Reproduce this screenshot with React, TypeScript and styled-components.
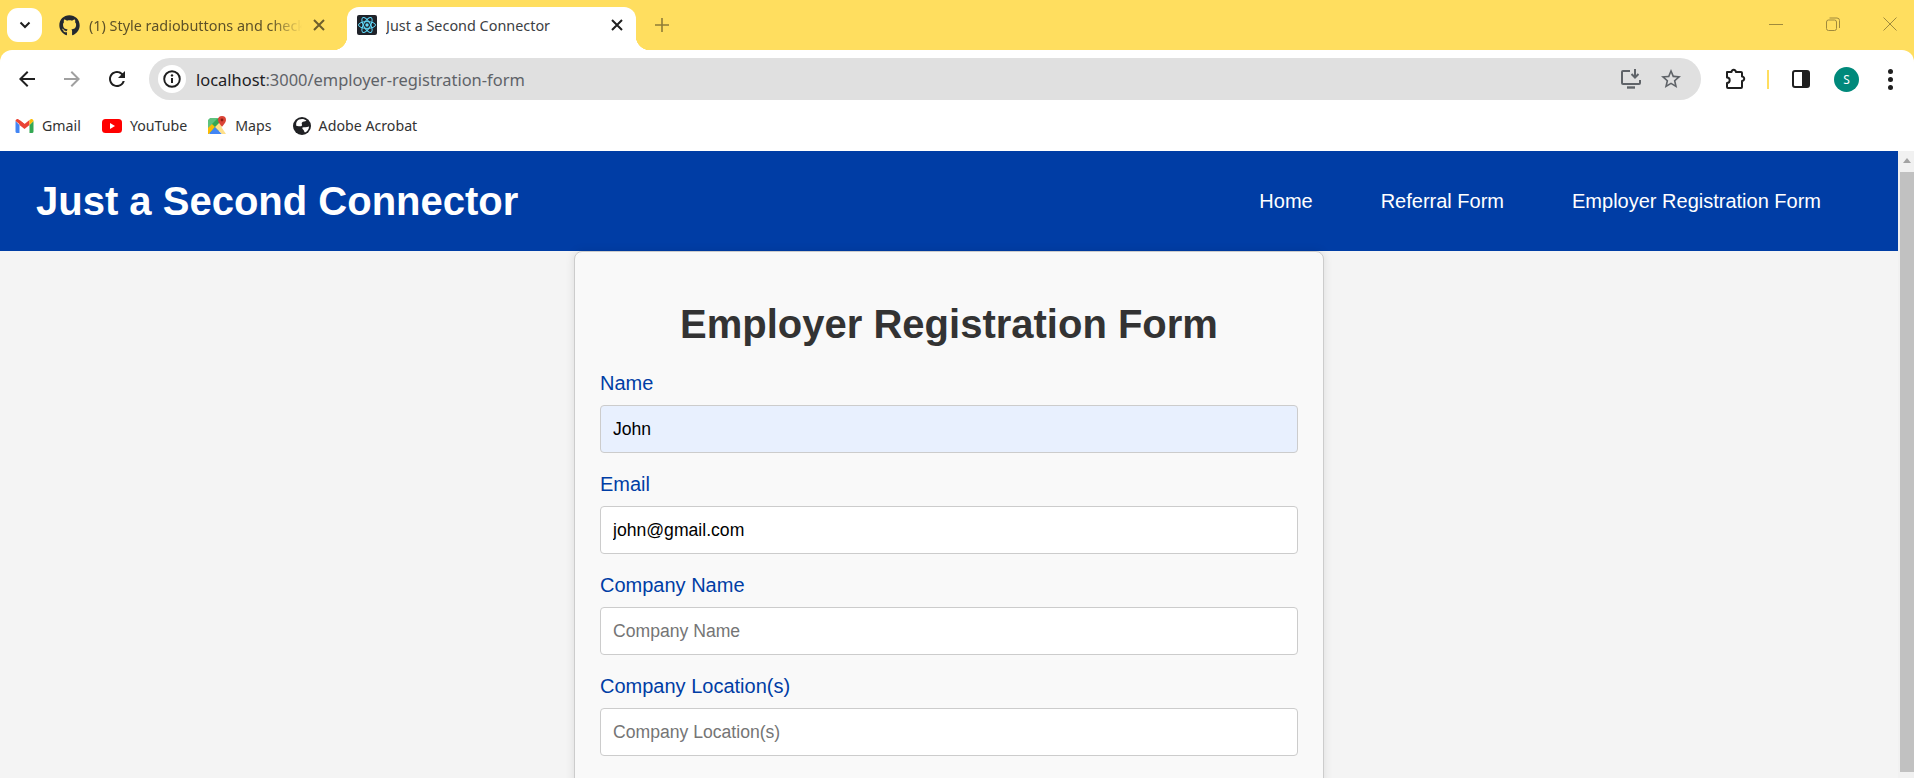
import React from "react";
import styled, { createGlobalStyle } from "styled-components";
import { FaGithub } from "react-icons/fa";

const YELLOW = "#ffde5f";
const BLUE = "#003da5";
const CHROME_FONT = `"Noto Sans", "Open Sans", sans-serif`;

const fields = [
  { label: "Name", value: "John", placeholder: "Name", autofilled: true },
  { label: "Email", value: "john@gmail.com", placeholder: "Email" },
  { label: "Company Name", value: "", placeholder: "Company Name" },
  { label: "Company Location(s)", value: "", placeholder: "Company Location(s)" },
];

const App = () => {
  return (
    <Window>
      <GlobalStyle />
      <TabStrip>
        <TabSearch>
          <svg width="12" height="8" viewBox="0 0 12 8">
            <path d="M1.5 1.5 6 6l4.5-4.5" fill="none" stroke="#1f1f1f" strokeWidth="2" />
          </svg>
        </TabSearch>
        <Tab>
          <FaGithub size={21} color="#24292f" />
          <TabTitle $fade>(1) Style radiobuttons and checkboxes</TabTitle>
          <CloseIcon color="#6e5f2c" />
        </Tab>
        <ActiveTab>
          <ReactFavicon />
          <TabTitle>Just a Second Connector</TabTitle>
          <CloseIcon color="#1f1f1f" />
        </ActiveTab>
        <NewTab>
          <svg width="14" height="14" viewBox="0 0 14 14">
            <path d="M7 0v14M0 7h14" stroke="#8f7c37" strokeWidth="1.6" />
          </svg>
        </NewTab>
        <WindowControls>
          <svg width="14" height="14" viewBox="0 0 14 14">
            <path d="M0 7.5h14" stroke="#a08a3c" strokeWidth="1" />
          </svg>
          <svg width="14" height="14" viewBox="0 0 14 14" fill="none" stroke="#a08a3c">
            <rect x="0.5" y="3" width="10" height="10.5" rx="2" />
            <path d="M3.5 1h7.5a2.5 2.5 0 0 1 2.5 2.5V11" />
          </svg>
          <svg width="14" height="14" viewBox="0 0 14 14">
            <path d="M0.5 0.5l13 13M13.5 0.5l-13 13" stroke="#a08a3c" strokeWidth="1" />
          </svg>
        </WindowControls>
      </TabStrip>

      <Toolbar>
        <NavIcons>
          <svg width="24" height="24" viewBox="0 0 24 24" fill="#1f1f1f">
            <path d="M20 11H7.83l5.59-5.59L12 4l-8 8 8 8 1.41-1.41L7.83 13H20v-2z" />
          </svg>
          <svg width="24" height="24" viewBox="0 0 24 24" fill="#a0a0a0">
            <path d="M4 11h12.17l-5.59-5.59L12 4l8 8-8 8-1.41-1.41L16.17 13H4v-2z" />
          </svg>
          <svg width="24" height="24" viewBox="0 0 24 24" fill="#1f1f1f">
            <path d="M17.65 6.35A7.958 7.958 0 0 0 12 4c-4.42 0-7.99 3.58-7.99 8s3.57 8 7.99 8c3.73 0 6.84-2.55 7.73-6h-2.08A5.99 5.99 0 0 1 12 18c-3.31 0-6-2.69-6-6s2.69-6 6-6c1.66 0 3.14.69 4.22 1.78L13 11h7V4l-2.35 2.35z" />
          </svg>
        </NavIcons>
        <AddressBar>
          <SiteInfo>
            <svg width="20" height="20" viewBox="0 0 20 20" fill="none">
              <circle cx="10" cy="10" r="7.8" stroke="#1f1f1f" strokeWidth="1.9" />
              <path d="M10 9v5" stroke="#1f1f1f" strokeWidth="2" />
              <circle cx="10" cy="6.4" r="1.2" fill="#1f1f1f" />
            </svg>
          </SiteInfo>
          <Url>
            localhost<UrlPath>:3000/employer-registration-form</UrlPath>
          </Url>
          <AddressActions>
            <svg width="22" height="22" viewBox="0 0 22 22" fill="none" stroke="#5f6368" strokeWidth="2">
              <path d="M10 3H3a1 1 0 0 0-1 1v11a1 1 0 0 0 1 1h16a1 1 0 0 0 1-1v-3" />
              <path d="M7 19.5h8" strokeWidth="2.4" />
              <path d="M15 1v8M11.5 6l3.5 3.5L18.500 6" />
            </svg>
            <svg width="24" height="24" viewBox="0 0 24 24" fill="#5f6368">
              <path d="M22 9.24l-7.19-.62L12 2 9.19 8.63 2 9.24l5.46 4.73L5.82 21 12 17.27 18.18 21l-1.63-7.03L22 9.24zM12 15.4l-3.76 2.27 1-4.28-3.32-2.88 4.38-.38L12 6.1l1.71 4.04 4.38.38-3.32 2.88 1 4.28L12 15.4z" />
            </svg>
          </AddressActions>
        </AddressBar>
        <ToolbarActions>
          <svg width="22" height="22" viewBox="0 0 22 22" fill="none" stroke="#1f1f1f" strokeWidth="2" strokeLinejoin="round">
            <path d="M3 4h4.500a2.200 2.200 0 1 1 4.400 0H17a1 1 0 0 1 1 1v3.500a2.200 2.200 0 1 1 0 4.400V19a1 1 0 0 1-1 1H4a1 1 0 0 1-1-1v-4a2.700 2.700 0 0 0 0-5.400V4z" />
          </svg>
          <ToolbarDivider />
          <svg width="18" height="18" viewBox="0 0 18 18">
            <rect x="1" y="1" width="16" height="16" rx="2" fill="#fff" stroke="#1f1f1f" strokeWidth="2" />
            <rect x="10" y="1" width="7" height="16" fill="#1f1f1f" />
          </svg>
          <Avatar>S</Avatar>
          <MoreMenu>
            <MenuDot />
            <MenuDot />
            <MenuDot />
          </MoreMenu>
        </ToolbarActions>
      </Toolbar>

      <BookmarksBar>
        <Bookmark>
          <GmailIcon />
          Gmail
        </Bookmark>
        <Bookmark>
          <YouTubeIcon />
          YouTube
        </Bookmark>
        <Bookmark>
          <MapsIcon />
          Maps
        </Bookmark>
        <Bookmark>
          <GlobeIcon />
          Adobe Acrobat
        </Bookmark>
      </BookmarksBar>

      <Viewport>
        <Page>
          <SiteHeader>
            <SiteTitle>Just a Second Connector</SiteTitle>
            <SiteNav>
              <SiteLink>Home</SiteLink>
              <SiteLink>Referral Form</SiteLink>
              <SiteLink>Employer Registration Form</SiteLink>
            </SiteNav>
          </SiteHeader>
          <FormCard>
            <FormTitle>Employer Registration Form</FormTitle>
            <FormFields>
              {fields.map((field) => (
                <Field key={field.label}>
                  <FieldLabel>{field.label}</FieldLabel>
                  <FieldInput
                    $autofilled={field.autofilled}
                    defaultValue={field.value}
                    placeholder={field.placeholder}
                  />
                </Field>
              ))}
            </FormFields>
          </FormCard>
        </Page>
        <Scrollbar>
          <ScrollArrow />
          <ScrollThumb />
        </Scrollbar>
      </Viewport>
    </Window>
  );
};

export default App;

const CloseIcon = ({ color }: { color: string }) => (
  <svg width="16" height="16" viewBox="0 0 16 16" style={{ flex: "none" }}>
    <path d="M3 3l10 10M13 3L3 13" stroke={color} strokeWidth="2" />
  </svg>
);

const ReactFavicon = () => (
  <svg width="20" height="20" viewBox="0 0 20 20">
    <rect width="20" height="20" rx="2" fill="#20232a" />
    <g fill="none" stroke="#61dafb" strokeWidth="1">
      <ellipse cx="10" cy="10" rx="8.500" ry="3.400" />
      <ellipse cx="10" cy="10" rx="8.500" ry="3.400" transform="rotate(60 10 10)" />
      <ellipse cx="10" cy="10" rx="8.500" ry="3.400" transform="rotate(120 10 10)" />
    </g>
    <circle cx="10" cy="10" r="1.700" fill="#61dafb" />
  </svg>
);

const GmailIcon = () => (
  <svg width="19" height="14" viewBox="0 0 18 14">
    <path d="M0 2v10.500A1.500 1.500 0 0 0 1.500 14H4V6z" fill="#4285f4" />
    <path d="M14 6v8h2.500a1.500 1.500 0 0 0 1.500-1.500V2z" fill="#34a853" />
    <path d="M0 2a2 2 0 0 1 3.200-1.600L9 5l-2 2.500L0 2z" fill="#ea4335" />
    <path d="M4 1l5 4 5-4v5l-5 4-5-4z" fill="#ea4335" />
    <path d="M14 1l.800-.600A2 2 0 0 1 18 2l-4 4z" fill="#fbbc04" />
  </svg>
);

const YouTubeIcon = () => (
  <svg width="20" height="14" viewBox="0 0 20 14">
    <rect width="20" height="14" rx="3.500" fill="#ff0000" />
    <path d="M8 4l5 3-5 3z" fill="#fff" />
  </svg>
);

const MapsIcon = () => (
  <svg width="19" height="19" viewBox="0 0 19 19">
    <path d="M0 4l11-2v15H1z" fill="#34a853" />
    <path d="M0 4l7 7-6 7H0z" fill="#fbbc04" />
    <path d="M1 18l6-7 7 7z" fill="#4285f4" />
    <path d="M2 2h8L0 12V4z" fill="#5ec27e" />
    <path d="M7 11l5-5 2 6 4 6h-4z" fill="#ffe08a" />
    <path d="M14 0a4 4 0 0 1 4 4c0 3-4 6-4 7 0-1-4-4-4-7a4 4 0 0 1 4-4z" fill="#db4437" />
    <circle cx="14" cy="4" r="1.400" fill="#8e1c13" />
  </svg>
);

const GlobeIcon = () => (
  <svg width="18" height="18" viewBox="0 0 18 18">
    <circle cx="9" cy="9" r="9" fill="#202124" />
    <path d="M6 2.500c3-1 5.500-.5 7.500 1-1.500 1.500-3.500.5-4.500 2s1 2.500-.5 3.500-3.500-.5-5 0C2.500 6 4 3.500 6 2.500z" fill="#fff" />
    <path d="M9.500 10.500c1.500-.5 4 0 6.500-1 .2 2.500-1.500 5-4 6-1-.5-.5-1.500-1.500-2.500s-1.500-1.800-1-2.500z" fill="#fff" />
  </svg>
);

const GlobalStyle = createGlobalStyle`
  html, body {
    margin: 0;
    padding: 0;
    height: 100%;
    overflow: hidden;
  }
`;

const Window = styled.div`
  display: flex;
  flex-direction: column;
  height: 778px;
  overflow: hidden;
  background: ${YELLOW};
  font-family: "Liberation Sans", Arial, sans-serif;
`;

const TabStrip = styled.div`
  display: flex;
  align-items: flex-end;
  flex: none;
  height: 50px;
  padding-left: 7px;
`;

const TabSearch = styled.div`
  display: flex;
  align-items: center;
  justify-content: center;
  align-self: flex-start;
  width: 35px;
  height: 34px;
  margin-top: 8px;
  background: #fff;
  border-radius: 11px;
`;

const Tab = styled.div`
  display: flex;
  align-items: center;
  width: 305px;
  height: 43px;
  padding: 0 20px 7px 17px;
  box-sizing: border-box;
  gap: 9px;
  font-family: ${CHROME_FONT};
  font-size: 14.4px;
  color: #5d5128;
`;

const ActiveTab = styled(Tab)`
  position: relative;
  width: 289px;
  padding: 0 11px 7px 10px;
  background: #fff;
  border-radius: 12px 12px 0 0;
  color: #3c4043;

  &::before,
  &::after {
    content: "";
    position: absolute;
    bottom: 0;
    width: 14px;
    height: 14px;
  }

  &::before {
    left: -14px;
    background: radial-gradient(circle at 0 0, transparent 14px, #fff 14.500px);
  }

  &::after {
    right: -14px;
    background: radial-gradient(circle at 100% 0, transparent 14px, #fff 14.500px);
  }
`;

const TabTitle = styled.span<{ $fade?: boolean }>`
  flex: 1;
  min-width: 0;
  overflow: hidden;
  white-space: nowrap;
  ${(props) =>
    props.$fade &&
    `mask-image: linear-gradient(to right, #000 85%, transparent 100%);`}
`;

const NewTab = styled.div`
  display: flex;
  align-items: center;
  align-self: flex-start;
  height: 50px;
  margin-left: 19px;
`;

const WindowControls = styled.div`
  display: flex;
  align-items: center;
  align-self: flex-start;
  gap: 43px;
  height: 48px;
  margin-left: auto;
  padding-right: 17px;
`;

const Toolbar = styled.div`
  display: flex;
  align-items: center;
  flex: none;
  height: 50px;
  padding-top: 8px;
  box-sizing: border-box;
  background: #fff;
  border-radius: 12px 12px 0 0;
`;

const NavIcons = styled.div`
  display: flex;
  align-items: center;
  gap: 21px;
  padding: 0 20px 0 15px;
`;

const AddressBar = styled.div`
  display: flex;
  align-items: center;
  flex: none;
  width: 1552px;
  height: 42px;
  background: #e0e0e0;
  border-radius: 21px;
  padding: 0 18px 0 9px;
  box-sizing: border-box;
`;

const SiteInfo = styled.div`
  display: flex;
  align-items: center;
  justify-content: center;
  width: 28px;
  height: 28px;
  background: #fff;
  border-radius: 50%;
`;

const Url = styled.div`
  margin-left: 10px;
  font-family: ${CHROME_FONT};
  font-size: 16.45px;
  color: #202124;
`;

const UrlPath = styled.span`
  color: #5f6368;
`;

const AddressActions = styled.div`
  display: flex;
  align-items: center;
  gap: 17px;
  margin-left: auto;
`;

const ToolbarActions = styled.div`
  display: flex;
  align-items: center;
  flex: none;
  gap: 21px;
  padding-left: 23px;
`;

const ToolbarDivider = styled.div`
  width: 2px;
  height: 19px;
  margin-right: 2px;
  background: ${YELLOW};
`;

const Avatar = styled.div`
  display: flex;
  align-items: center;
  justify-content: center;
  width: 25px;
  height: 25px;
  margin: 0 8px 0 3px;
  border-radius: 50%;
  background: #00897b;
  color: #fff;
  font-family: ${CHROME_FONT};
  font-size: 12px;
`;

const MoreMenu = styled.div`
  display: flex;
  flex-direction: column;
  flex: none;
  gap: 3px;
`;

const MenuDot = styled.span`
  display: block;
  width: 5px;
  height: 5px;
  border-radius: 50%;
  background: #1f1f1f;
`;

const BookmarksBar = styled.div`
  display: flex;
  align-items: center;
  flex: none;
  gap: 21px;
  height: 51px;
  padding-left: 15px;
  background: #fff;
`;

const Bookmark = styled.div`
  display: flex;
  align-items: center;
  gap: 8px;
  font-family: ${CHROME_FONT};
  font-size: 14.2px;
  color: #333;
`;

const Viewport = styled.div`
  display: flex;
  flex: 1;
  min-height: 0;
  background: #f4f4f4;
`;

const Page = styled.div`
  flex: 1;
  min-width: 0;
`;

const SiteHeader = styled.header`
  display: flex;
  align-items: center;
  justify-content: space-between;
  height: 100px;
  padding: 0 77px 0 36px;
  background: ${BLUE};
  color: #fff;
`;

const SiteTitle = styled.h1`
  margin: 0;
  font-size: 40px;
  font-weight: 700;
`;

const SiteNav = styled.nav`
  display: flex;
  gap: 68px;
`;

const SiteLink = styled.a`
  font-size: 20px;
  color: #fff;
`;

const FormCard = styled.section`
  box-sizing: border-box;
  width: 750px;
  margin: 0 auto;
  padding: 25px 25px 80px;
  background: #f9f9f9;
  border: 1px solid #ccc;
  border-radius: 8px;
  box-shadow: 0 0 10px rgba(0, 0, 0, 0.1);
`;

const FormTitle = styled.h2`
  margin: 25px 0;
  font-size: 40px;
  font-weight: 700;
  text-align: center;
  color: #333;
`;

const FormFields = styled.div`
  display: flex;
  flex-direction: column;
  gap: 20px;
`;

const Field = styled.div`
  display: flex;
  flex-direction: column;
  gap: 10px;
`;

const FieldLabel = styled.label`
  font-size: 20px;
  color: ${BLUE};
`;

const FieldInput = styled.input<{ $autofilled?: boolean }>`
  box-sizing: border-box;
  width: 100%;
  height: 48px;
  padding: 0 12px;
  font-family: "Liberation Sans", Arial, sans-serif;
  font-size: 17.6px;
  color: #000;
  background: ${(props) => (props.$autofilled ? "#e8f0fe" : "#fff")};
  border: 1px solid #ccc;
  border-radius: 4px;
  outline: none;

  &::placeholder {
    color: #757575;
  }
`;

const Scrollbar = styled.div`
  flex: none;
  width: 16px;
  padding-left: 2px;
  box-sizing: border-box;
  background: #f1f1f1;
`;

const ScrollArrow = styled.div`
  width: 0;
  height: 0;
  margin: 7px auto 0;
  border: 4px solid transparent;
  border-top: 0;
  border-bottom: 5px solid #a3a3a3;
`;

const ScrollThumb = styled.div`
  height: 600px;
  margin-top: 9px;
  background: #c1c1c1;
`;
